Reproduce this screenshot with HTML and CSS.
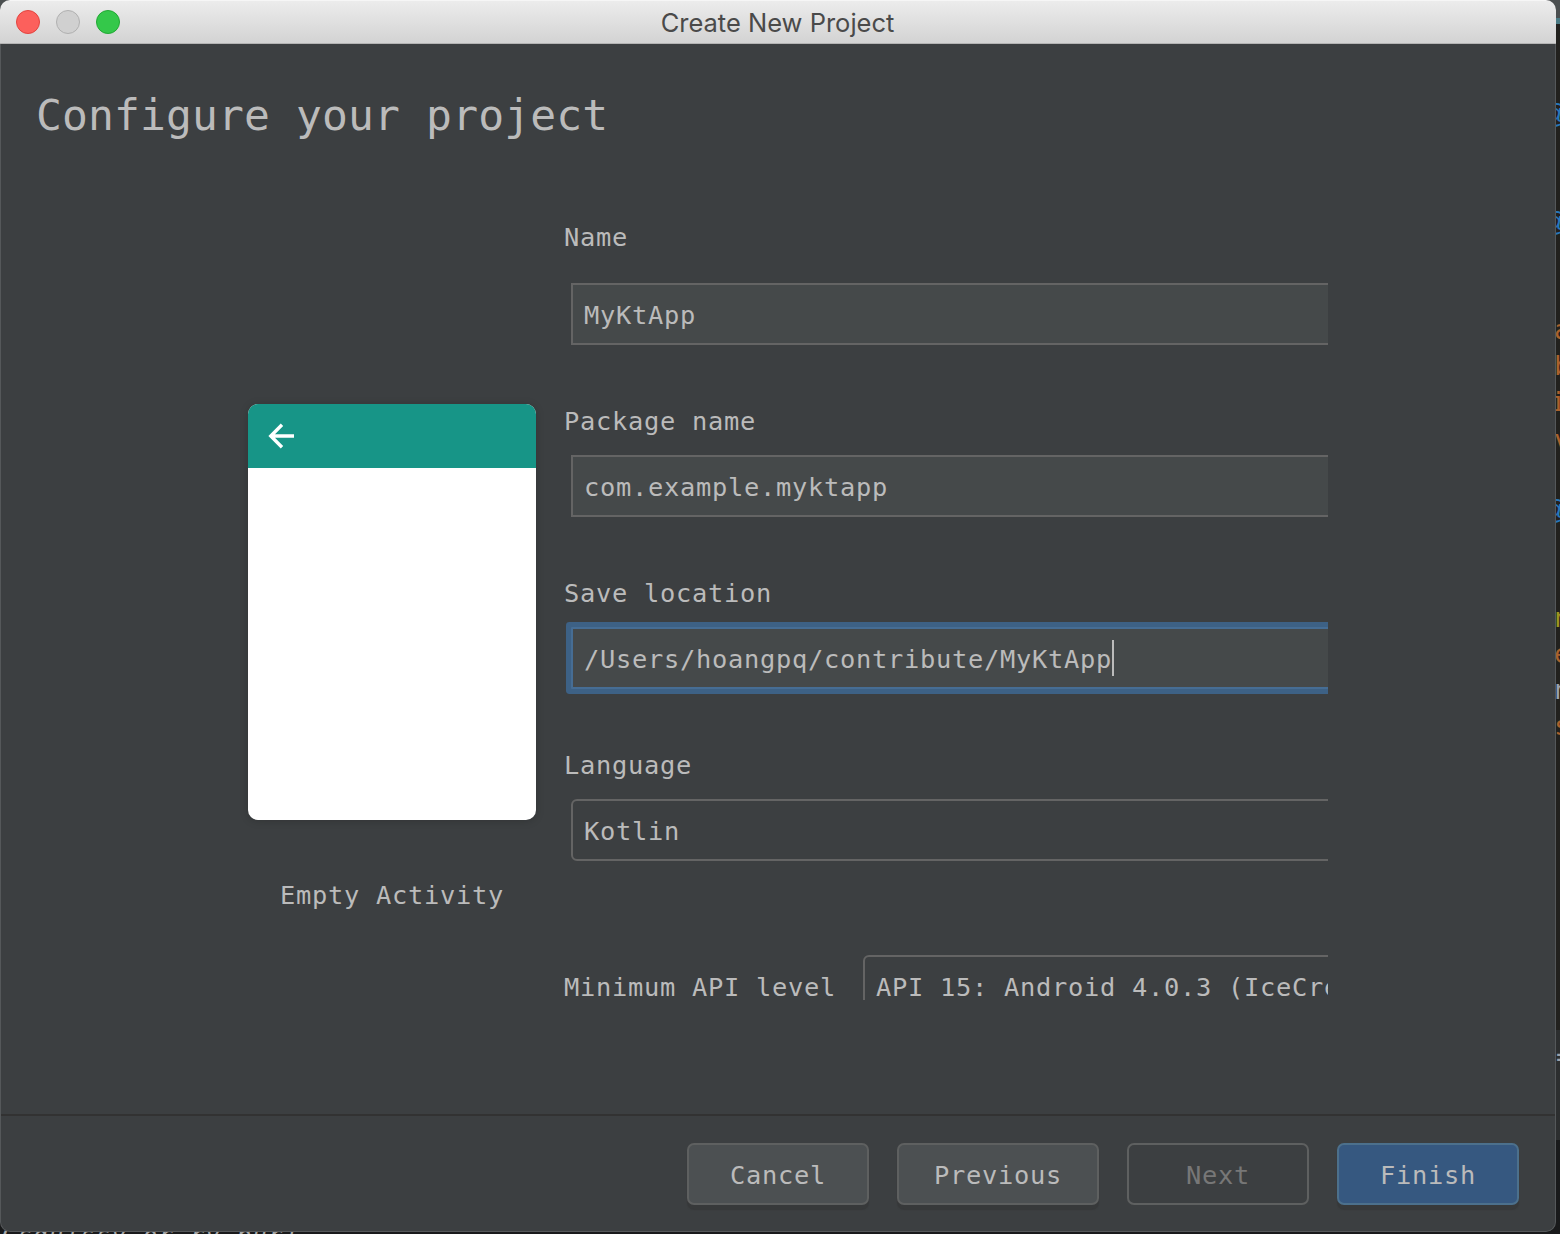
FILE: index.html
```html
<!DOCTYPE html>
<html lang="en">
<head>
<meta charset="utf-8">
<title>Create New Project</title>
<link rel="stylesheet" href="styles.css">
</head>
<body>
<div class="editor" aria-hidden="true">
  <span class="stripe"></span>
  <span class="code blue at-1">@</span>
  <span class="code blue at-2">@</span>
  <span class="code orange c-1">a</span>
  <span class="code orange c-2">b</span>
  <span class="code orange c-3">i</span>
  <span class="code orange c-4">v</span>
  <span class="code blue at-3">@</span>
  <span class="code yellow c-5">n</span>
  <span class="code orange c-6">e</span>
  <span class="code white c-7">n</span>
  <span class="code orange c-8">s</span>
  <span class="code white c-9">=</span>
  <span class="console">Gsquissy or ry puri</span>
</div>
<main class="window">
  <header class="titlebar">
    <div class="lights"><i class="light close"></i><i class="light minimize"></i><i class="light zoom"></i></div>
    <span class="title">Create New Project</span>
  </header>
  <section class="content">
    <h1>Configure your project</h1>
    <div class="columns">
      <aside class="template">
        <div class="phone">
          <div class="appbar">
            <svg width="28" height="28" viewBox="0 0 28 28" fill="none" stroke="#fff" stroke-width="3.4"><path d="M27 14H4M15 2.8 3.8 14 15 25.2"/></svg>
          </div>
        </div>
        <p class="template-name">Empty Activity</p>
      </aside>
      <form class="form">
        <label class="label first">Name</label>
        <div class="field">MyKtApp</div>
        <label class="label">Package name</label>
        <div class="field">com.example.myktapp</div>
        <label class="label">Save location</label>
        <div class="field focused">/Users/hoangpq/contribute/MyKtApp<span class="caret"></span></div>
        <label class="label">Language</label>
        <div class="field combo">Kotlin</div>
        <div class="api-row">
          <label>Minimum API level</label>
          <div class="field combo api">API 15: Android 4.0.3 (IceCreamSandwich)</div>
        </div>
      </form>
    </div>
  </section>
  <footer class="footer">
    <button class="btn" type="button">Cancel</button>
    <button class="btn wide" type="button">Previous</button>
    <button class="btn disabled" type="button" disabled>Next</button>
    <button class="btn primary" type="button">Finish</button>
  </footer>
</main>
</body>
</html>
```
FILE: styles.css
```css
* { box-sizing: border-box; }

body {
  margin: 0;
  width: 1560px;
  height: 1234px;
  overflow: hidden;
  position: relative;
  background: #1f1f1e;
  color: #bbbbbb;
  font: 25.4px/32px "DejaVu Sans Mono", monospace;
  letter-spacing: 0.71px;
}

/* Editor behind the dialog */
.editor {
  position: absolute;
  inset: 0;
  overflow: hidden;
  background: linear-gradient(#4b4f50 0 18px, #22211e 18px 1030px, #2c2e2f 1030px 1140px, #191a1b 1140px);
}
.stripe { position: absolute; right: 0; top: 18px; width: 4px; height: 6px; background: #4a7a84; }
.code { position: absolute; left: 1554px; font-size: 27px; }
.blue { color: #2677bd; left: 1541px; font-family: "Liberation Sans", sans-serif; }
.orange { color: #a9622d; }
.yellow { color: #9b9420; }
.white { color: #9aa2ac; }
.at-1 { top: 98px; }
.at-2 { top: 206px; }
.at-3 { top: 494px; }
.c-1 { top: 314px; }
.c-2 { top: 350px; }
.c-3 { top: 386px; left: 1550px; }
.c-4 { top: 424px; }
.c-5 { top: 602px; }
.c-6 { top: 638px; }
.c-7 { top: 674px; }
.c-8 { top: 710px; }
.c-9 { top: 1041px; left: 1556px; }
.console { position: absolute; left: 2px; top: 1220px; color: #a8a8a8; font-style: italic; font-size: 24px; letter-spacing: 1.2px; white-space: pre; }

/* Dialog window */
.window {
  position: relative;
  display: flex;
  flex-direction: column;
  width: 1556px;
  height: 1232px;
  border-radius: 10px;
  overflow: hidden;
  background: #3c3f41;
}
.window::after {
  content: "";
  position: absolute;
  inset: 44px 0 0;
  border: 1px solid #55585a;
  border-top: 0;
  border-radius: 0 0 10px 10px;
}
.titlebar {
  flex: none;
  height: 44px;
  display: grid;
  grid-template-columns: 1fr auto 1fr;
  align-items: center;
  padding: 0 17px 0 16px;
  background: linear-gradient(#ececec, #d3d3d3);
  border-top: 1px solid #f6f6f6;
  border-bottom: 1px solid #b4b4b4;
}
.lights { display: flex; gap: 16px; }
.light { width: 24px; height: 24px; border-radius: 50%; border: 1px solid; }
.close { background: #fc605c; border-color: #e2443f; }
.minimize { background: #d0d0d0; border-color: #b0b0b0; }
.zoom { background: #34c84a; border-color: #22a834; }
.title {
  font: 25.5px/32px Inter, sans-serif;
  letter-spacing: 0;
  color: #4a4a4a;
  padding-top: 2px;
}

.content { height: 1070px; padding: 41px 37px 0 36px; }
h1 {
  margin: 0;
  font-size: 43px;
  font-weight: 400;
  line-height: 60px;
  letter-spacing: 0.12px;
}
.columns { display: flex; gap: 28px; padding: 76px 0 0 212px; }

.template { width: 288px; padding-top: 183px; }
.phone {
  height: 416px;
  border-radius: 10px;
  overflow: hidden;
  background: #fff;
  box-shadow: 0 1px 8px rgba(0, 0, 0, 0.18);
}
.appbar {
  display: flex;
  align-items: center;
  height: 64px;
  padding-left: 19px;
  background: #179587;
}
.template-name { margin: 59px 0 0; text-align: center; }

.form { width: 764px; height: 779px; overflow: hidden; }
.label { display: block; margin: 60px 0 18px; }
.label.first { margin: 0 0 30px; }
.field {
  display: flex;
  align-items: center;
  width: 900px;
  height: 62px;
  margin-left: 7px;
  padding: 1px 0 0 11px;
  border: 2px solid #646464;
  background: #45494a;
  white-space: nowrap;
}
.focused { border-color: #466d94; box-shadow: 0 0 0 5px #3d6185; border-radius: 1px; }
.caret { width: 2px; height: 36px; margin-top: -2px; background: #bbb; }
.combo { border-radius: 6px; background: none; }
.api-row { display: flex; align-items: center; margin-top: 94px; }
.api-row label { flex: none; width: 292px; padding-top: 1px; }
.api { flex: none; }

.footer {
  flex: 1;
  display: flex;
  justify-content: flex-end;
  gap: 28px;
  padding: 27px 37px 0 0;
  border-top: 2px solid #323232;
}
.btn {
  width: 182px;
  height: 62px;
  padding: 1px 0 0;
  border: 2px solid #5e6060;
  border-radius: 7px;
  background: #4c5052;
  box-shadow: 0 5px 1px #37393a;
  color: #bbb;
  font: inherit;
  letter-spacing: inherit;
}
.wide { width: 202px; }
.disabled { background: none; box-shadow: none; color: #777777; }
.primary { background: #365880; border-color: #4c708c; }
```
